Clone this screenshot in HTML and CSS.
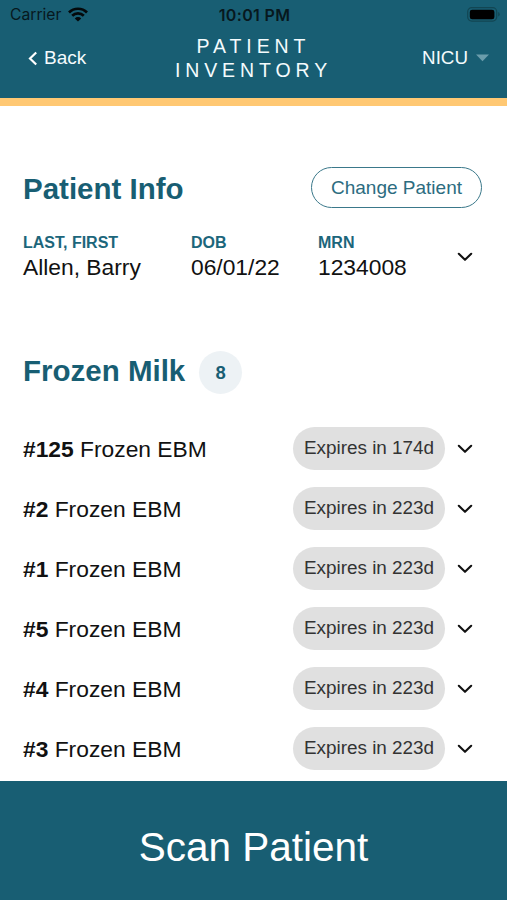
FILE: index.html
```html
<!DOCTYPE html>
<html lang="en">
<head>
<meta charset="utf-8">
<title>Patient Inventory</title>
<link rel="stylesheet" href="styles.css">
</head>
<body>
<svg class="defs" width="0" height="0"><defs><symbol id="chev" viewBox="0 0 16 10"><path d="M1.8 1.8 8 7.8l6.2-6" fill="none" stroke="#111" stroke-width="2.1" stroke-linecap="round" stroke-linejoin="round"/></symbol></defs></svg>
<header class="top">
  <div class="status">
    <div class="carrier"><span>Carrier</span>
      <svg class="wifi" width="20" height="15" viewBox="0 0 20 15" fill="none" stroke="#04090b" stroke-width="2.7"><path d="M1 5.5a12.7 12.7 0 0 1 18 0M4.2 8.7a8.2 8.2 0 0 1 11.6 0"/><path d="M10 14.6 6.8 11.4a4.5 4.5 0 0 1 6.4 0z" fill="#04090b" stroke="none"/></svg>
    </div>
    <div class="time">10:01 PM</div>
    <svg class="battery" width="33" height="15" viewBox="0 0 33 15"><rect x=".7" y=".7" width="29" height="13.4" rx="4" fill="none" stroke="#124653" stroke-width="1.2"/><rect x="2.8" y="2.7" width="24.6" height="9.6" rx="2.4" fill="#000"/><path d="M31.2 5v4.6q1.5-.6 1.5-2.3T31.2 5z" fill="#124653"/></svg>
  </div>
  <div class="nav">
    <div class="back"><svg width="10" height="15" viewBox="0 0 10 15"><path d="M8.2 1.5 2 7.5l6.2 6" fill="none" stroke="#fff" stroke-width="2.2"/></svg><span>Back</span></div>
    <h1 class="title">PATIENT<br>INVENTORY</h1>
    <div class="unit"><span>NICU</span><svg width="13" height="8" viewBox="0 0 13 8"><path d="M0 .5h13L6.5 7.3z" fill="#6b9dac"/></svg></div>
  </div>
</header>
<main>
  <section class="info">
    <div class="heading"><h2>Patient Info</h2><button class="change">Change Patient</button></div>
    <div class="fields">
      <div><div class="label">LAST, FIRST</div><div class="value">Allen, Barry</div></div>
      <div><div class="label">DOB</div><div class="value">06/01/22</div></div>
      <div><div class="label">MRN</div><div class="value">1234008</div></div>
      <svg class="chev" width="16" height="10"><use href="#chev"/></svg>
    </div>
  </section>
  <section class="milk">
    <div class="milk-head"><h2>Frozen Milk</h2><span class="count">8</span></div>
    <div class="row"><span class="name"><b>#125</b> Frozen EBM</span><span class="pill">Expires in 174d</span><svg class="chev" width="16" height="10"><use href="#chev"/></svg></div>
    <div class="row"><span class="name"><b>#2</b> Frozen EBM</span><span class="pill">Expires in 223d</span><svg class="chev" width="16" height="10"><use href="#chev"/></svg></div>
    <div class="row"><span class="name"><b>#1</b> Frozen EBM</span><span class="pill">Expires in 223d</span><svg class="chev" width="16" height="10"><use href="#chev"/></svg></div>
    <div class="row"><span class="name"><b>#5</b> Frozen EBM</span><span class="pill">Expires in 223d</span><svg class="chev" width="16" height="10"><use href="#chev"/></svg></div>
    <div class="row"><span class="name"><b>#4</b> Frozen EBM</span><span class="pill">Expires in 223d</span><svg class="chev" width="16" height="10"><use href="#chev"/></svg></div>
    <div class="row"><span class="name"><b>#3</b> Frozen EBM</span><span class="pill">Expires in 223d</span><svg class="chev" width="16" height="10"><use href="#chev"/></svg></div>
  </section>
</main>
<footer class="scan">Scan Patient</footer>
</body>
</html>
```
FILE: styles.css
```css
* { box-sizing: border-box; margin: 0; }
body { width: 507px; height: 900px; overflow: hidden; display: flex; flex-direction: column; background: #fff; color: #111; font-family: "Liberation Sans", Arial, sans-serif; }
svg { display: block; flex: none; }
.defs { position: absolute; }
.top { flex: none; height: 106px; background: #185e73; border-bottom: 8px solid #ffc873; }
.status { height: 30px; padding: 0 8px 0 10px; display: grid; grid-template-columns: 1fr auto 1fr; align-items: center; font: 500 16px/30px Inter, sans-serif; color: #07181e; }
.carrier { display: flex; align-items: center; gap: 7px; font-weight: 400; font-size: 15.7px; }
.wifi { margin-bottom: 1px; }
.time { font-weight: 600; letter-spacing: .35px; }
.battery { justify-self: end; margin: 0 -1px 1px 0; }
.nav { display: grid; grid-template-columns: 1fr auto 1fr; align-items: center; height: 55px; padding: 0 18px 0 28px; color: #f4fbfd; font-size: 19px; }
.back, .unit { display: flex; align-items: center; padding-top: 1px; }
.back { gap: 6px; }
.unit { justify-self: end; gap: 8px; font-size: 18.8px; }
.title { font-size: 19.5px; font-weight: 400; line-height: 24px; letter-spacing: 4.9px; text-align: center; padding-right: 10px; }
main { flex: 1; min-height: 0; padding: 60px 25px 0 23px; }
h2 { font-size: 29.5px; line-height: 42px; color: #185e73; }
.heading { display: flex; justify-content: space-between; align-items: center; height: 42px; }
.heading h2 { padding-top: 4px; }
.change { width: 171px; height: 41px; border: 1.5px solid #3a788a; border-radius: 21px; background: #fff; color: #2c6c80; font: 19px "Liberation Sans", Arial, sans-serif; padding: 1px 0 0; }
.fields { display: grid; grid-template-columns: 168px 127px 1fr 16px; align-items: center; margin-top: 24px; padding-right: 9px; }
.label { font-size: 16px; line-height: 22px; font-weight: 700; color: #1c667b; }
.value { font-size: 22.8px; line-height: 27px; }
.milk { margin-top: 70px; }
.milk-head { display: flex; align-items: center; gap: 14px; height: 43px; margin-bottom: 24px; }
.milk-head h2 { padding-bottom: 4px; }
.count { width: 43px; height: 43px; border-radius: 50%; background: #edf2f5; color: #185e73; font-size: 18.5px; font-weight: 700; line-height: 44px; text-align: center; }
.row { display: flex; align-items: center; height: 60px; padding-right: 9px; }
.name { flex: 1; font-size: 22.8px; line-height: 28px; padding-top: 2px; }
.row .chev { margin-top: 2px; }
.pill { width: 152px; height: 43px; border-radius: 22px; background: #e0e0e0; color: #333; font-size: 18.9px; line-height: 42px; text-align: center; margin-right: 12px; }
.scan { flex: none; height: 119px; padding-top: 13px; background: #185e73; color: #fff; font-size: 40.5px; line-height: 106px; text-align: center; }
```
